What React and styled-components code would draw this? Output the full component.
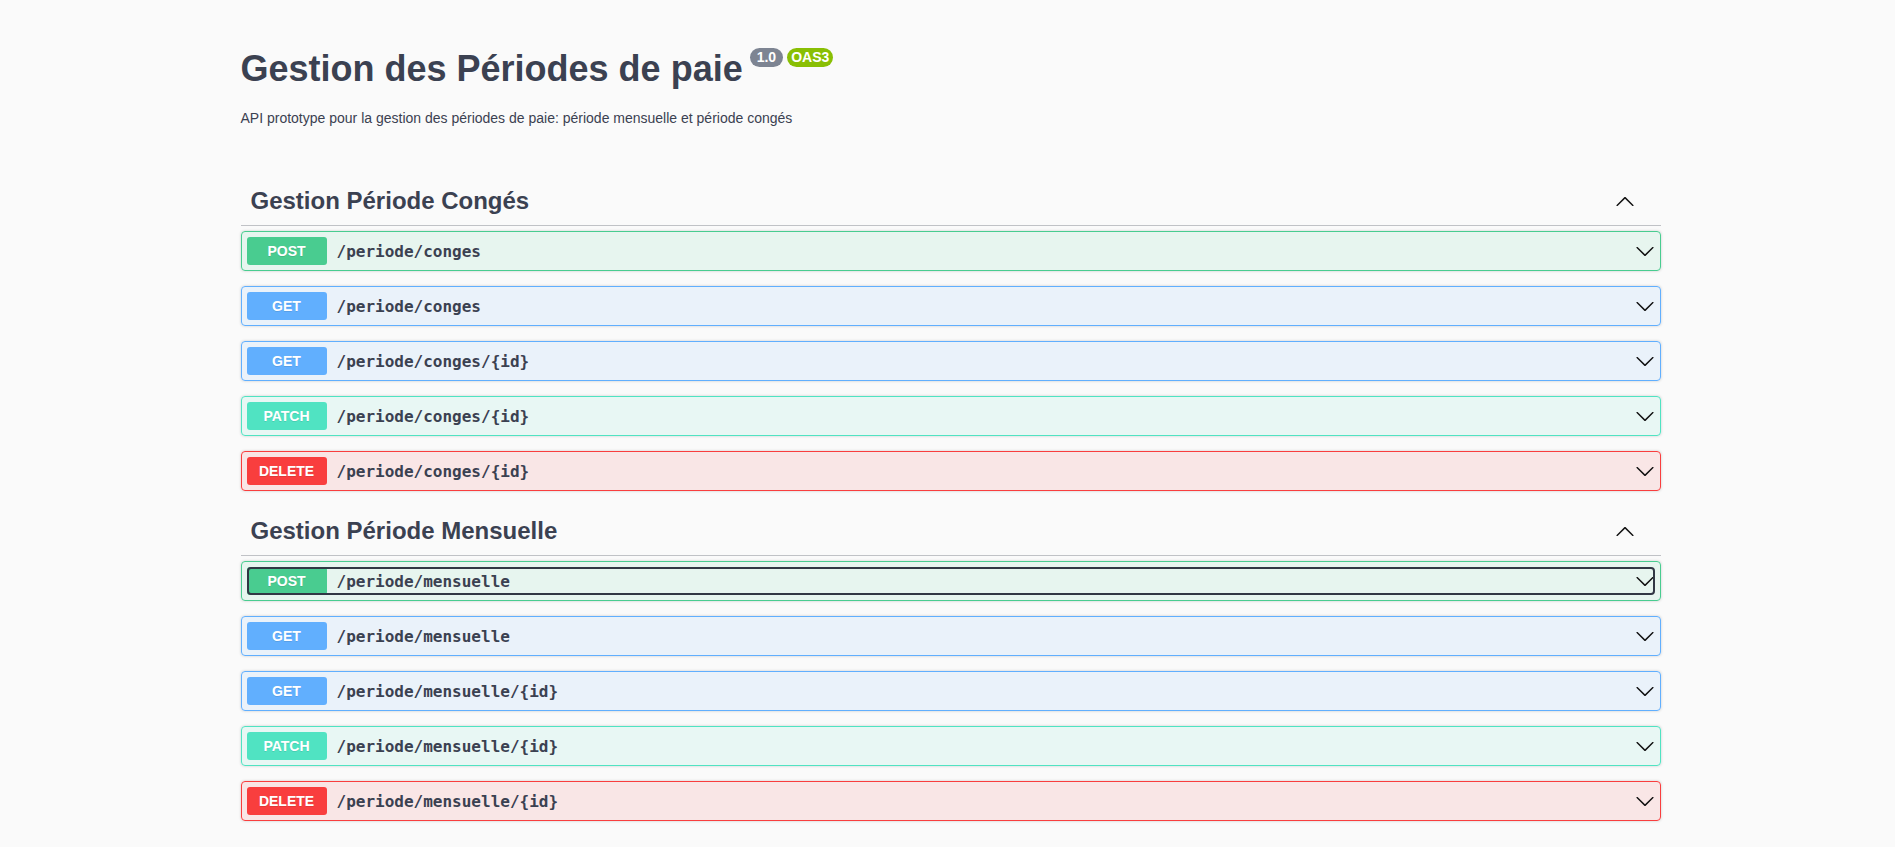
import React from "react";
import styled, { createGlobalStyle } from "styled-components";

const GlobalStyle = createGlobalStyle`
  html, body {
    margin: 0;
    padding: 0;
    background: #fafafa;
  }
  body {
    font-family: "Liberation Sans", Arial, sans-serif;
    color: #3b4151;
  }
  * { box-sizing: border-box; }
`;

const METHOD_COLORS = {
  post: { border: "#49cc90", bg: "rgba(73,204,144,.1)" },
  get: { border: "#61affe", bg: "rgba(97,175,254,.1)" },
  patch: { border: "#50e3c2", bg: "rgba(80,227,194,.1)" },
  delete: { border: "#f93e3e", bg: "rgba(249,62,62,.1)" },
};

const Wrapper = styled.div`
  max-width: 1460px;
  margin: 0 auto;
  padding: 0 17px 0 23px;
`;

const Info = styled.div`
  margin: 48px 0 51px;
`;

const Title = styled.h2`
  display: flex;
  align-items: flex-start;
  margin: 0 0 20px;
  font-family: "Liberation Sans", Arial, sans-serif;
  font-size: 36px;
  font-weight: 700;
  line-height: normal;
  color: #3b4151;
`;

const Badge = styled.span`
  display: inline-block;
  margin: 0 0 0 ${(p) => p.$gap}px;
  padding: 2px ${(p) => p.$padX}px;
  border-radius: 57px;
  background: ${(p) => p.$bg};
  color: #fff;
  font-family: "Liberation Sans", Arial, sans-serif;
  font-size: 14px;
  font-weight: 700;
  line-height: 15px;
`;

const Description = styled.p`
  margin: 0;
  font-family: "Liberation Sans", Arial, sans-serif;
  font-size: 14px;
  line-height: normal;
  color: #3b4151;
`;

const TagSection = styled.section`
  display: flex;
  flex-direction: column;
  & + & {
    margin-top: 1px;
  }
`;

const TagHeader = styled.h3`
  display: flex;
  align-items: center;
  margin: 0 0 5px;
  padding: 10px 20px 10px 10px;
  border-bottom: 1px solid rgba(59, 65, 81, 0.3);
  font-family: "Liberation Sans", Arial, sans-serif;
  font-size: 24px;
  font-weight: 700;
  line-height: normal;
  color: #3b4151;
`;

const TagName = styled.span`
  flex: 1;
`;

const IconButton = styled.span`
  display: flex;
  align-items: center;
  padding-right: ${(p) => p.$pr || 0}px;
`;

const Opblock = styled.div`
  margin: 0 0 15px;
  border: 1px solid ${(p) => METHOD_COLORS[p.$method].border};
  border-radius: 4px;
  background: ${(p) => METHOD_COLORS[p.$method].bg};
  box-shadow: 0 0 3px rgba(0, 0, 0, 0.19);
`;

const Summary = styled.div`
  display: flex;
  align-items: center;
  padding: 5px;
`;

const SummaryControl = styled.div`
  display: flex;
  align-items: center;
  flex: 1;
  border-radius: 4px;
  outline: ${(p) => (p.$focused ? "2px solid #313744" : "none")};
  outline-offset: -2px;
`;

const Method = styled.span`
  min-width: 80px;
  padding: 6px 0;
  border-radius: 3px;
  background: ${(p) => METHOD_COLORS[p.$method].border};
  color: #fff;
  font-family: "Liberation Sans", Arial, sans-serif;
  font-size: 14px;
  font-weight: 700;
  line-height: normal;
  text-align: center;
  text-shadow: 0 1px 0 rgba(0, 0, 0, 0.1);
`;

const Path = styled.span`
  flex: 1;
  padding: 0 10px;
  font-family: "DejaVu Sans Mono", monospace;
  font-size: 16px;
  font-weight: 600;
  color: #3b4151;
`;

const ArrowDown = () => (
  <svg width="20" height="20" viewBox="0 0 20 20" aria-hidden="true">
    <path
      fill="#111"
      d="M17.418 6.109c.272-.268.709-.268.979 0s.271.701 0 .969l-7.908 7.83c-.27.268-.707.268-.979 0l-7.908-7.83c-.27-.268-.27-.701 0-.969.271-.268.709-.268.979 0L10 13.25l7.418-7.141z"
    />
  </svg>
);

const ArrowUp = () => (
  <svg width="20" height="20" viewBox="0 0 20 20" aria-hidden="true">
    <path
      fill="#111"
      d="M17.418 14.908c.272.268.709.268.979 0s.271-.701 0-.969l-7.908-7.83c-.27-.268-.707-.268-.979 0l-7.908 7.83c-.27.268-.27.701 0 .969.271.268.709.268.979 0L10 7.767l7.418 7.141z"
    />
  </svg>
);

const sections = [
  {
    name: "Gestion Période Congés",
    ops: [
      { method: "post", path: "/periode/conges" },
      { method: "get", path: "/periode/conges" },
      { method: "get", path: "/periode/conges/{id}" },
      { method: "patch", path: "/periode/conges/{id}" },
      { method: "delete", path: "/periode/conges/{id}" },
    ],
  },
  {
    name: "Gestion Période Mensuelle",
    ops: [
      { method: "post", path: "/periode/mensuelle", focused: true },
      { method: "get", path: "/periode/mensuelle" },
      { method: "get", path: "/periode/mensuelle/{id}" },
      { method: "patch", path: "/periode/mensuelle/{id}" },
      { method: "delete", path: "/periode/mensuelle/{id}" },
    ],
  },
];

export default function App() {
  return (
    <>
      <GlobalStyle />
      <Wrapper>
        <Info>
          <Title>
            Gestion des Périodes de paie
            <Badge $bg="#7d8492" $gap={7} $padX={7}>1.0</Badge>
            <Badge $bg="#89bf04" $gap={4} $padX={4}>OAS3</Badge>
          </Title>
          <Description>
            API prototype pour la gestion des périodes de paie: période mensuelle et période congés
          </Description>
        </Info>
        {sections.map((s) => (
          <TagSection key={s.name}>
            <TagHeader>
              <TagName>{s.name}</TagName>
              <IconButton $pr={6}>
                <ArrowUp />
              </IconButton>
            </TagHeader>
            {s.ops.map((op, i) => (
              <Opblock key={i} $method={op.method}>
                <Summary>
                  <SummaryControl $focused={op.focused}>
                    <Method $method={op.method}>{op.method.toUpperCase()}</Method>
                    <Path>{op.path}</Path>
                    <IconButton>
                      <ArrowDown />
                    </IconButton>
                  </SummaryControl>
                </Summary>
              </Opblock>
            ))}
          </TagSection>
        ))}
      </Wrapper>
    </>
  );
}
